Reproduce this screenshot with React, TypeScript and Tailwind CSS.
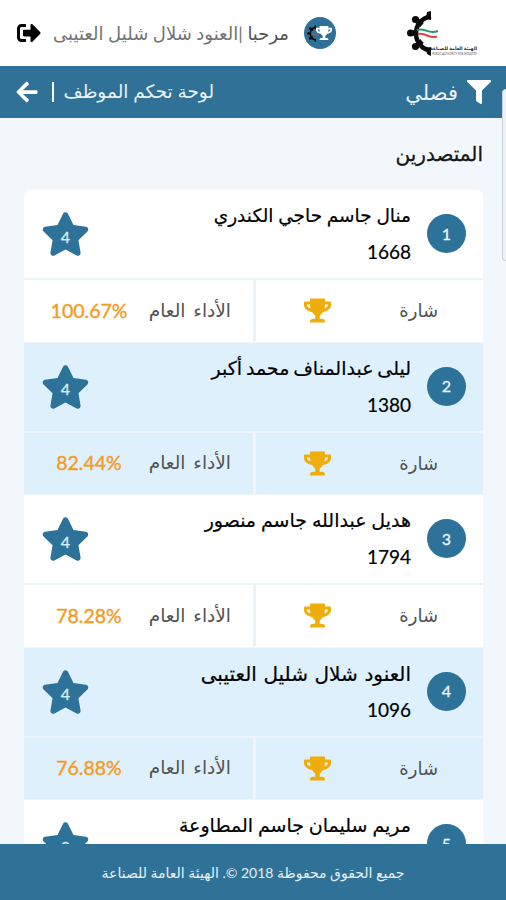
import { FaArrowLeft, FaFilter, FaSignOutAlt, FaStar, FaTrophy } from 'react-icons/fa';
import clsx from 'clsx';

interface Leader {
  rank: number;
  name: string;
  code: string;
  stars: number;
  score: string;
  nameStyle: string;
}

const LEADERS: Leader[] = [
  {
    rank: 1,
    name: 'منال جاسم حاجي الكندري',
    code: '1668',
    stars: 4,
    score: '100.67%',
    nameStyle: 'text-[18.5px]',
  },
  {
    rank: 2,
    name: 'ليلى عبدالمناف محمد أكبر',
    code: '1380',
    stars: 4,
    score: '82.44%',
    nameStyle: 'text-[19px] [word-spacing:-1px]',
  },
  {
    rank: 3,
    name: 'هديل عبدالله جاسم منصور',
    code: '1794',
    stars: 4,
    score: '78.28%',
    nameStyle: 'text-[19px]',
  },
  {
    rank: 4,
    name: 'العنود شلال شليل العتيبى',
    code: '1096',
    stars: 4,
    score: '76.88%',
    nameStyle: 'text-[20px] [word-spacing:1.5px]',
  },
  {
    rank: 5,
    name: 'مريم سليمان جاسم المطاوعة',
    code: '1125',
    stars: 3,
    score: '75.10%',
    nameStyle: 'text-[19px]',
  },
];

function GearMark({ className }: { className?: string }) {
  return (
    <svg viewBox="0 0 24 46" className={clsx('overflow-visible', className)}>
      <path d="M24 6.5 C4 9 4 38 24 40.5" fill="none" stroke="#0b0b0b" strokeWidth="4.5" />
      <path d="M20 2l4-1v9l-5-1z M20 44l4 2v-9l-5 1z" fill="#0b0b0b" />
      <path d="M8 9l7 6M3 23h8M8 37l7-6" stroke="#0b0b0b" strokeWidth="5.5" />
      <circle cx="8.5" cy="9.5" r="3.6" fill="#0b0b0b" />
      <circle cx="3.6" cy="23" r="3.6" fill="#0b0b0b" />
      <circle cx="8.5" cy="36.5" r="3.6" fill="#0b0b0b" />
      <path d="M10 20c8-3 11 5 21 1" fill="none" stroke="#25966a" strokeWidth="2" />
      <path d="M11 24c8-2 11 5.5 19 2.5" fill="none" stroke="#d94748" strokeWidth="2" />
    </svg>
  );
}

function Header() {
  return (
    <header className="flex h-[66px] shrink-0 items-center bg-white pr-[29px] pl-[17px]">
      <div className="flex h-[46px] w-[70px] items-end">
        <div className="flex w-[46px] flex-col text-right">
          <span className="text-[4.7px] leading-[7px] font-bold whitespace-nowrap text-neutral-800">
            الهيئة العامة للصناعة
          </span>
          <span dir="ltr" className="text-[2.7px] leading-[4px] whitespace-nowrap text-neutral-600">
            PUBLIC AUTHORITY FOR INDUSTRY
          </span>
        </div>
        <GearMark className="h-[46px] w-[24px]" />
      </div>
      <div className="relative mr-[71px] flex size-8 items-center justify-center rounded-full bg-[#2f7099]">
        <GearMark className="absolute top-[8px] left-[3px] h-[17px] w-[9px]" />
        <FaTrophy className="relative left-[4px] size-[16px] text-white" />
      </div>
      <p className="mr-[15px] text-[18px] whitespace-nowrap text-neutral-500">
        <span className="text-neutral-600">مرحبا</span> |العنود شلال شليل العتيبى
      </p>
      <FaSignOutAlt className="mr-auto h-[24px] w-[24px] text-black" />
    </header>
  );
}

function TitleBar() {
  return (
    <div className="flex h-[52px] shrink-0 items-center bg-[#2f7197] pr-[15px] pl-[15px] text-[18.5px] text-[#eaf3f8]">
      <FaFilter className="size-[24px] text-white" />
      <span className="mr-[9px] text-[21px]">فصلي</span>
      <span className="mr-auto">لوحة تحكم الموظف</span>
      <span className="mr-[10px] ml-[7px] h-[20px] w-[1.5px] bg-white" />
      <FaArrowLeft className="mr-[6px] size-[24px] text-white" />
    </div>
  );
}

function LeaderCard({ leader }: { leader: Leader }) {
  const tinted = leader.rank % 2 === 0;
  const line = tinted ? 'border-[#edf6fc]' : 'border-[#eaf3f7]';

  return (
    <article
      className={clsx(
        'h-[152.5px] shrink-0 border-b border-[#eef6fb]',
        tinted ? 'bg-[#dff0fd]' : 'bg-white',
        leader.rank === 1 && 'rounded-t-md',
      )}
    >
      <div className={clsx('flex h-[90px] border-b-2 pr-[17px] pl-[17px]', line)}>
        <span className="mt-[24px] flex size-[39px] items-center justify-center rounded-full bg-[#2c7299] text-[16px] text-[#eef6fa] [-webkit-text-stroke:0.3px]">
          {leader.rank}
        </span>
        <div className="mr-[16px] pt-[8px] text-black">
          <h2
            className={clsx(
              'h-[36px] leading-[34px] whitespace-nowrap [-webkit-text-stroke:0.2px]',
              leader.nameStyle,
            )}
          >
            {leader.name}
          </h2>
          <p className="text-[19px] leading-[35px] [-webkit-text-stroke:0.2px]">{leader.code}</p>
        </div>
        <span className="relative mt-[20px] mr-auto flex h-[48px] w-[49px] items-center justify-center">
          <FaStar className="absolute inset-0 size-full text-[#2c7299]" />
          <span className="relative pt-[5px] text-[16px] text-[#d9eef6] [-webkit-text-stroke:0.3px]">
            {leader.stars}
          </span>
        </span>
      </div>
      <div className="flex h-[61px] items-center">
        <div
          className={clsx('flex h-full w-[230px] shrink-0 items-center border-l-3 pr-[45px]', line)}
        >
          <span className="w-[107px] text-[18px] text-neutral-600">شارة</span>
          <FaTrophy className="h-[25px] w-[27px] text-[#efad0c]" />
        </div>
        <div className="flex min-w-0 flex-1 items-center pr-[22px]">
          <span className="w-[84px] shrink-0 text-[18.5px] whitespace-nowrap text-neutral-600 [word-spacing:3px]">
            الأداء العام
          </span>
          <span
            dir="ltr"
            className="mr-[18px] w-[80px] text-center text-[19.5px] text-[#f59b23] [-webkit-text-stroke:0.4px]"
          >
            {leader.score}
          </span>
        </div>
      </div>
    </article>
  );
}

export default function App() {
  return (
    <div
      dir="rtl"
      className="relative flex h-[900px] w-[506px] flex-col overflow-hidden bg-[#f2f7fb] font-[Lato,'DejaVu_Sans',sans-serif]"
    >
      <Header />
      <TitleBar />
      <main className="flex min-h-0 flex-1 flex-col overflow-hidden pr-[23px] pl-[24px]">
        <h1 className="h-[72px] shrink-0 text-[20px] leading-[70px] text-neutral-900 [-webkit-text-stroke:0.3px]">
          المتصدرين
        </h1>
        {LEADERS.map((leader) => (
          <LeaderCard key={leader.rank} leader={leader} />
        ))}
      </main>
      <footer className="flex h-[56px] shrink-0 items-center justify-center bg-[#2f7197] text-[14px] text-[#e6f1f7]">
        جميع الحقوق محفوظة 2018 ©. الهيئة العامة للصناعة
      </footer>

      {/* Edge panel handle */}
      <div className="absolute top-[89px] right-0 h-[172px] w-[4px] rounded-l-md border border-r-0 border-[#ccd4da] bg-[#eef2f5]" />
    </div>
  );
}
